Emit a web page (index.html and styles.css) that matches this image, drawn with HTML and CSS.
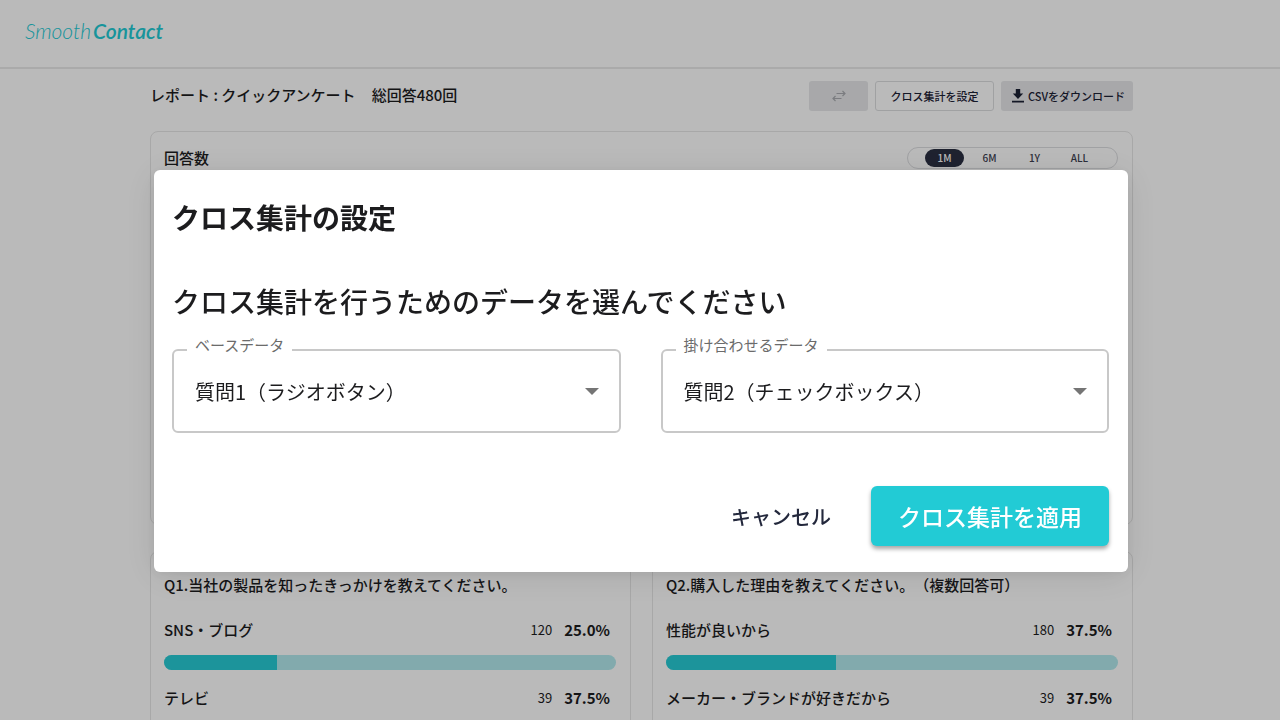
FILE: index.html
```html
<!DOCTYPE html>
<html lang="ja">
<head>
<meta charset="utf-8">
<meta name="viewport" content="width=device-width, initial-scale=1">
<title>SmoothContact</title>
<link rel="stylesheet" href="styles.css">
</head>
<body>
<header class="site-header">
  <a class="logo" href="#"><span class="logo-light">Smooth</span><span class="logo-bold">Contact</span></a>
</header>

<main class="page">
  <div class="toolbar">
    <h1 class="report-title"><span>レポート : クイックアンケート</span><span>総回答480回</span></h1>
    <div class="actions">
      <button class="btn btn-swap" type="button" disabled aria-label="入れ替え">
        <svg width="16" height="12" viewBox="0 0 16 12" fill="none" stroke="currentColor" stroke-width="1.2"><path d="M5.500 3.500h8.500M11.500 1l2.500 2.500L11.500 6M10.500 8.500H2M4.500 6L2 8.500 4.500 11"/></svg>
      </button>
      <button class="btn btn-outline" type="button">クロス集計を設定</button>
      <button class="btn btn-download" type="button">
        <svg width="12" height="14" viewBox="0 0 12 14" fill="currentColor"><path d="M3.800 0h4.400v4.500h3L6 10 .800 4.500h3zM0 11.800h12v1.700H0z"/></svg>
        CSVをダウンロード
      </button>
    </div>
  </div>

  <section class="card chart-card">
    <div class="chart-head">
      <h2 class="card-title">回答数</h2>
      <div class="range">
        <button class="range-item is-active" type="button">1M</button>
        <button class="range-item" type="button">6M</button>
        <button class="range-item" type="button">1Y</button>
        <button class="range-item" type="button">ALL</button>
      </div>
    </div>
  </section>

  <div class="questions">
    <section class="card question">
      <h2 class="question-title">Q1.当社の製品を知ったきっかけを教えてください。</h2>
      <div class="answer">
        <div class="answer-row"><span class="answer-name">SNS・ブログ</span><span class="count">120</span><span class="percent">25.0%</span></div>
        <div class="bar"><div class="bar-fill" style="width:25%"></div></div>
      </div>
      <div class="answer">
        <div class="answer-row"><span class="answer-name">テレビ</span><span class="count">39</span><span class="percent">37.5%</span></div>
        <div class="bar"><div class="bar-fill" style="width:37.5%"></div></div>
      </div>
    </section>
    <section class="card question">
      <h2 class="question-title">Q2.購入した理由を教えてください。（複数回答可）</h2>
      <div class="answer">
        <div class="answer-row"><span class="answer-name">性能が良いから</span><span class="count">180</span><span class="percent">37.5%</span></div>
        <div class="bar"><div class="bar-fill" style="width:37.5%"></div></div>
      </div>
      <div class="answer">
        <div class="answer-row"><span class="answer-name">メーカー・ブランドが好きだから</span><span class="count">39</span><span class="percent">37.5%</span></div>
        <div class="bar"><div class="bar-fill" style="width:37.5%"></div></div>
      </div>
    </section>
  </div>
</main>

<div class="backdrop">
  <form class="modal" role="dialog" aria-modal="true" aria-labelledby="modal-title">
    <h2 class="modal-title" id="modal-title">クロス集計の設定</h2>
    <p class="modal-lead">クロス集計を行うためのデータを選んでください</p>
    <div class="fields">
      <div class="field">
        <label class="field-label" for="base">ベースデータ</label>
        <select class="field-select" id="base"><option>質問1（ラジオボタン）</option></select>
        <svg class="field-arrow" width="14" height="7" viewBox="0 0 14 7" fill="currentColor"><path d="M0 0h14L7 7z"/></svg>
      </div>
      <div class="field">
        <label class="field-label" for="cross">掛け合わせるデータ</label>
        <select class="field-select" id="cross"><option>質問2（チェックボックス）</option></select>
        <svg class="field-arrow" width="14" height="7" viewBox="0 0 14 7" fill="currentColor"><path d="M0 0h14L7 7z"/></svg>
      </div>
    </div>
    <div class="modal-actions">
      <button class="modal-cancel" type="button">キャンセル</button>
      <button class="modal-apply" type="button">クロス集計を適用</button>
    </div>
  </form>
</div>
</body>
</html>
```
FILE: styles.css
```css
* {
  box-sizing: border-box;
}

body {
  margin: 0;
  height: 100vh;
  overflow: hidden;
  background: #fff;
  color: #1c1c1e;
  font-family: "Noto Sans CJK JP", sans-serif;
  font-size: 15px;
  font-weight: 500;
  text-spacing-trim: space-all;
}

h1, h2, p {
  margin: 0;
  font-size: inherit;
  font-weight: inherit;
}

button, select {
  font: inherit;
  color: inherit;
}

button {
  border: 0;
  padding: 0;
  background: none;
  cursor: pointer;
}

.site-header {
  display: flex;
  align-items: center;
  height: 69px;
  padding: 0 25px 5px;
  border-bottom: 2px solid #e9e9ea;
}

.logo {
  color: #22cbd5;
  font-family: Lato, sans-serif;
  font-size: 21px;
  font-style: italic;
  line-height: 24px;
  text-decoration: none;
}

.logo-light {
  font-weight: 300;
}

.logo-bold {
  margin-left: 2px;
  font-weight: 600;
}

.page {
  max-width: 986px;
  margin: 0 auto;
  padding-left: 3px;
}

.toolbar {
  display: flex;
  align-items: center;
  justify-content: space-between;
  height: 54px;
}

.report-title {
  display: flex;
  gap: 16px;
  padding-bottom: 3px;
}

.actions {
  display: flex;
  gap: 7px;
}

.btn {
  display: flex;
  align-items: center;
  justify-content: center;
  gap: 4px;
  height: 30px;
  border-radius: 3px;
  background: #e6e7e9;
  color: #1c2135;
  font-size: 11px;
}

.btn-swap {
  width: 59px;
  color: #a9abb0;
}

.btn-outline {
  width: 119px;
  border: 1px solid #dcdddf;
  background: #fff;
}

.btn-download {
  width: 132px;
  padding-left: 3px;
}

.card {
  border: 1px solid #e6e6e6;
  border-radius: 8px;
}

.chart-card {
  height: 394px;
  margin-top: 8px;
  padding: 15px 14px 15px 13px;
}

.chart-head {
  display: flex;
  align-items: center;
  justify-content: space-between;
  height: 22px;
}

.card-title {
  padding-bottom: 2px;
}

.range {
  display: flex;
  gap: 6px;
  padding: 1px 18px 1px 17px;
  border: 1px solid #dcdde0;
  border-radius: 12px;
}

.range-item {
  width: 39px;
  height: 18px;
  border-radius: 9px;
  color: #3c4050;
  font-size: 10px;
  line-height: 18px;
}

.range-item.is-active {
  background: #2a2f42;
  color: #fff;
}

.questions {
  display: grid;
  grid-template-columns: 1fr 1fr;
  gap: 21px;
  margin-top: 26px;
}

.question {
  padding: 21px 14px 21px 13px;
}

.question-title {
  line-height: 24px;
  white-space: nowrap;
}

.answer {
  margin-top: 20px;
}

.answer + .answer {
  margin-top: 15px;
}

.answer-row {
  display: flex;
  align-items: center;
  gap: 12px;
  height: 24px;
  padding-right: 6px;
}

.answer-name {
  flex: 1;
}

.count {
  font-size: 13px;
  font-weight: 400;
}

.percent {
  font-weight: 700;
}

.bar {
  height: 15px;
  margin-top: 14px;
  overflow: hidden;
  border-radius: 8px;
  background: #b2eaed;
}

.bar-fill {
  height: 100%;
  background: #27cbd5;
}

.backdrop {
  position: fixed;
  inset: 0;
  display: flex;
  align-items: center;
  justify-content: center;
  padding: 22px 24px 0 26px;
  background: rgba(0, 0, 0, 0.27);
}

.modal {
  width: 100%;
  max-width: 974px;
  padding: 27px 19px 26px 18px;
  border-radius: 6px;
  background: #fff;
  box-shadow: 0 4px 36px rgba(0, 0, 0, 0.1), 0 2px 12px rgba(0, 0, 0, 0.06);
}

.modal-title,
.modal-lead {
  font-size: 28px;
  line-height: 40px;
}

.modal-title {
  font-weight: 700;
}

.modal-lead {
  margin-top: 44px;
}

.fields {
  display: grid;
  grid-template-columns: 1fr 1fr;
  gap: 40px;
  margin-top: 28px;
}

.field {
  position: relative;
}

.field-label {
  position: absolute;
  top: -15px;
  left: 15px;
  padding: 0 8px;
  background: #fff;
  color: #6b6b6b;
  font-size: 15px;
  font-weight: 400;
  line-height: 22px;
}

.field-select {
  appearance: none;
  display: block;
  width: 100%;
  height: 84px;
  padding: 0 56px 0 21px;
  border: 2px solid #c8c8c8;
  border-radius: 6px;
  background: #fff;
  font-size: 20px;
  font-weight: 400;
}

.field-arrow {
  position: absolute;
  top: 50%;
  right: 22px;
  margin-top: -3px;
  color: #757575;
  pointer-events: none;
}

.modal-actions {
  display: flex;
  align-items: center;
  justify-content: flex-end;
  gap: 40px;
  margin-top: 53px;
}

.modal-cancel {
  color: #23283c;
  font-size: 20px;
}

.modal-apply {
  height: 60px;
  padding: 0 27px;
  border-radius: 6px;
  background: #22cbd5;
  box-shadow: 0 3px 4px rgba(0, 0, 0, 0.35);
  color: #fff;
  font-size: 23px;
}
```
